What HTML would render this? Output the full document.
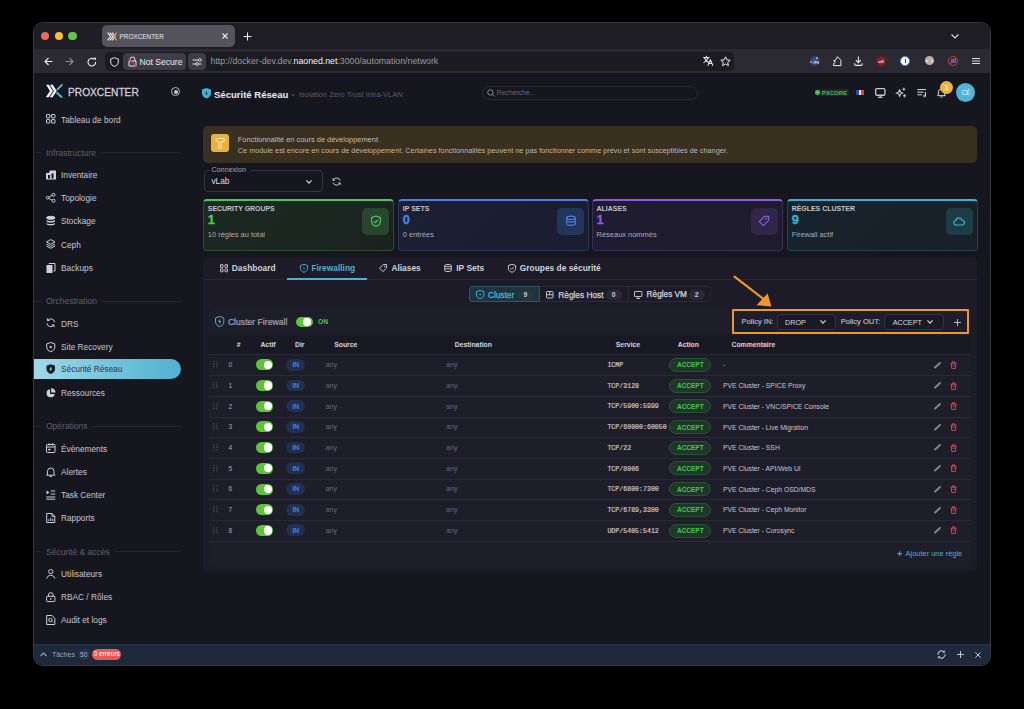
<!DOCTYPE html>
<html><head><meta charset="utf-8">
<style>
*{box-sizing:border-box;margin:0;padding:0}
html,body{width:1024px;height:709px;background:#000;overflow:hidden;font-family:"Liberation Sans",sans-serif}
#win{position:absolute;left:34px;top:23px;width:956px;height:641.5px;border-radius:9px;overflow:hidden;background:#16161f;box-shadow:0 0 0 1px #38373e}
#in{position:absolute;left:-34px;top:-23px;width:1024px;height:709px}
.a{position:absolute}
.t{position:absolute;white-space:nowrap;line-height:1}
svg{position:absolute;overflow:visible}
#title{left:34px;top:23px;width:956px;height:26px;background:#1e1d23}
#tool{left:34px;top:49px;width:956px;height:24px;background:#2b2a33}
#bottom{left:34px;top:644px;width:956px;height:21px;background:#1e293b;border-top:1px solid #26324a}
.side{color:#c6c6d0;font-size:8.3px}
.sec{color:#5f5f6b;font-size:8.5px}
.secline{position:absolute;height:1px;background:#262631}
</style></head><body>
<div id="win"><div id="in">
  <div class="a" id="title"></div>
  <div class="a" id="tool"></div>
  <!-- traffic lights -->
  <div class="a" style="left:40.6px;top:31.5px;width:8.8px;height:8.8px;border-radius:50%;background:#ee6a5f"></div>
  <div class="a" style="left:54.5px;top:31.5px;width:8.8px;height:8.8px;border-radius:50%;background:#f5c13b"></div>
  <div class="a" style="left:68.4px;top:31.5px;width:8.8px;height:8.8px;border-radius:50%;background:#5fc454"></div>
  <!-- tab -->
  <div class="a" style="left:102px;top:25px;width:133px;height:22px;border-radius:5px;background:#54535b"></div>
  <svg style="left:106.6px;top:31.5px" width="10" height="9" viewBox="0 0 10 9">
    <path d="M0.6 0.6L3.6 4.5L0.6 8.4M2.9 0.6L5.9 4.5L2.9 8.4" stroke="#ececf2" stroke-width="1.2" fill="none"/>
    <path d="M5.2 0.6L8 4.5L5.2 8.4" stroke="#ececf2" stroke-width="1.2" fill="none"/>
    <path d="M9.6 0.6L7.2 4.5L9.6 8.4" stroke="#f0962a" stroke-width="1.3" fill="none"/>
  </svg>
  <div class="t" style="left:119.6px;top:33.8px;font-size:6.4px;color:#ececf0">PROXCENTER</div>
  <svg style="left:222px;top:33px" width="6" height="6" viewBox="0 0 6 6"><path d="M0.5 0.5L5.5 5.5M5.5 0.5L0.5 5.5" stroke="#e8e8ee" stroke-width="1.1"/></svg>
  <svg style="left:243px;top:31.5px" width="9" height="9" viewBox="0 0 9 9"><path d="M4.5 0.5V8.5M0.5 4.5H8.5" stroke="#e8e8ee" stroke-width="1.1"/></svg>
  <!-- tab overflow chevron -->
  <svg style="left:950.5px;top:33.6px" width="8" height="5" viewBox="0 0 8 5"><path d="M0.5 0.5L4 4L7.5 0.5" stroke="#e0e0e6" stroke-width="1.1" fill="none"/></svg>

  <!-- toolbar -->
  <svg style="left:43.5px;top:57px" width="9" height="9" viewBox="0 0 9 9"><path d="M8.5 4.5H1M4.5 1L1 4.5L4.5 8" stroke="#ececf0" stroke-width="1.1" fill="none"/></svg>
  <svg style="left:65px;top:57px" width="9" height="9" viewBox="0 0 9 9"><path d="M0.5 4.5H8M4.5 1L8 4.5L4.5 8" stroke="#8e8d95" stroke-width="1.1" fill="none"/></svg>
  <svg style="left:86.5px;top:56.5px" width="10" height="10" viewBox="0 0 10 10"><path d="M8.6 5A3.8 3.8 0 1 1 7.2 2.2" stroke="#ececf0" stroke-width="1.1" fill="none"/><path d="M6.2 0.8H9V3.6Z" fill="#ececf0"/></svg>
  <div class="a" style="left:105px;top:52px;width:629px;height:19px;border-radius:5px;background:#1c1b22"></div>
  <svg style="left:110px;top:56.5px" width="9" height="10" viewBox="0 0 9 10"><path d="M4.5 0.6L8.3 2V5C8.3 7.3 6.6 8.8 4.5 9.4C2.4 8.8 0.7 7.3 0.7 5V2Z" stroke="#e6e6ec" stroke-width="1" fill="none"/></svg>
  <div class="a" style="left:123px;top:53px;width:63px;height:16.5px;border-radius:4px;background:#3e3d47"></div>
  <svg style="left:128px;top:56px" width="9" height="11" viewBox="0 0 9 11"><path d="M2 5V3.5A2.5 2.5 0 0 1 7 3.5V5M1 5H8V10H1Z" stroke="#e6e6ec" stroke-width="1" fill="none"/><path d="M0.5 3L8.5 10.5" stroke="#e0393e" stroke-width="1.1"/></svg>
  <div class="t" style="left:139.5px;top:58px;font-size:8.6px;color:#ececf0">Not Secure</div>
  <div class="a" style="left:188px;top:53px;width:18px;height:16.5px;border-radius:4px;background:#3e3d47"></div>
  <svg style="left:192px;top:57.5px" width="10" height="8" viewBox="0 0 10 8"><path d="M0.5 2H6M0.5 6H3.5M6.5 6H9.5" stroke="#e6e6ec" stroke-width="1"/><circle cx="7.8" cy="2" r="1.4" stroke="#e6e6ec" stroke-width="0.9" fill="none"/><circle cx="5" cy="6" r="1.4" stroke="#e6e6ec" stroke-width="0.9" fill="none"/></svg>
  <div class="t" style="left:210.5px;top:57.3px;font-size:8.77px;color:#9b9aa2">http://docker-dev.dev.<span style="color:#f4f4f6">naoned.net</span>:3000/automation/network</div>
  <svg style="left:702.8px;top:56px" width="10.4" height="9.8" viewBox="0 0 10.4 9.8" fill="none" stroke="#ececf0" stroke-width="1.05" stroke-linecap="round" stroke-linejoin="round"><path d="M0.6 1.5H6.2M3.4 0.3V1.5M1.5 1.7Q3 5.6 5.8 6.4M5.2 1.7Q4 5 0.8 6.6"/><path d="M5 9.4L7.4 3.8L9.8 9.4M5.9 7.6H8.9"/></svg>
  <svg style="left:719.5px;top:56px" width="11" height="11" viewBox="0 0 11 11"><path d="M5.5 0.8L6.9 3.9L10.2 4.2L7.7 6.4L8.4 9.7L5.5 8L2.6 9.7L3.3 6.4L0.8 4.2L4.1 3.9Z" stroke="#ececf0" stroke-width="1" fill="none" stroke-linejoin="round"/></svg>
  <!-- extensions -->
  <div class="a" style="left:809.9px;top:56px;width:10.3px;height:10.3px;border-radius:50%;background:radial-gradient(circle at 45% 50%,#3a5f9a,#183060)"></div><div class="a" style="left:815.5px;top:56.6px;width:2.6px;height:2.2px;border-radius:50%;background:#d9a96a"></div><div class="a" style="left:810.2px;top:60.8px;width:2px;height:2.4px;border-radius:50%;background:#c99a5e"></div><svg style="left:812.5px;top:59.5px" width="6" height="4" viewBox="0 0 6 4"><path d="M0.3 3.7L1.3 1.5M2 3.7V1.6H3.6V2.6H2M4.2 3.7V1.6L5.6 3.7V1.6" stroke="#e8eef8" stroke-width="0.6" fill="none"/></svg>
  <svg style="left:833px;top:56.2px" width="8.6" height="10.2" viewBox="0 0 8.6 10.2"><path d="M0.6 4.6H2.2L4.4 0.7L7.9 4.3V9.6H0.6V7.6L2.4 6.3Z" stroke="#ececf0" stroke-width="1" fill="none" stroke-linejoin="round"/></svg>
  <svg style="left:854px;top:56.2px" width="8.8" height="10" viewBox="0 0 8.8 10"><path d="M4.4 0.5V6.6M1.9 4.2L4.4 6.7L6.9 4.2M0.6 7.2V8.2Q0.6 9.4 1.8 9.4H7Q8.2 9.4 8.2 8.2V7.2" stroke="#ececf0" stroke-width="1.05" fill="none"/></svg>
  <svg style="left:876px;top:55.5px" width="10" height="11" viewBox="0 0 10 11"><path d="M5 0.5L9.5 2V6C9.5 8.4 7.3 9.8 5 10.5C2.7 9.8 0.5 8.4 0.5 6V2Z" fill="#8b1a1a"/><text x="5" y="6.8" font-size="4" text-anchor="middle" fill="#fff" font-family="Liberation Sans" font-weight="bold">uO</text></svg>
  <div class="a" style="left:900.3px;top:56px;width:9.8px;height:9.8px;border-radius:50%;background:#fff;border:1.3px solid #3d86f0"></div>
  <div class="a" style="left:904.5px;top:58.6px;width:1.4px;height:4.6px;background:#3a3a44"></div>
  <div class="a" style="left:924.7px;top:56.2px;width:9.3px;height:9.3px;border-radius:50%;background:#d6a884"></div>
  <div class="a" style="left:924.8px;top:59.3px;width:4.2px;height:4.2px;border-radius:50%;background:#dfeaf2;border:0.8px solid #8fb8d8"></div>
  <div class="a" style="left:929.6px;top:59.3px;width:4.2px;height:4.2px;border-radius:50%;background:#dfeaf2;border:0.8px solid #8fb8d8"></div>
  <div class="a" style="left:948.4px;top:56px;width:9.8px;height:9.8px;border-radius:50%;background:#2a2a3c;border:1.5px solid #d63535"></div>
  <div class="a" style="left:950.6px;top:59.2px;width:5.4px;height:3.4px;background:#3a6ad0"></div>
  <svg style="left:948.4px;top:56px" width="9.8" height="9.8" viewBox="0 0 9.8 9.8"><path d="M8 1.8L1.8 8" stroke="#d63535" stroke-width="1.2"/></svg>
  <svg style="left:972px;top:57.8px" width="8" height="6" viewBox="0 0 8 6"><path d="M0 0.55H8M0 3H8M0 5.45H8" stroke="#e0e0e6" stroke-width="1.1"/></svg>


  <!-- sidebar -->
  <svg style="left:45px;top:84px" width="18" height="14" viewBox="0 0 18 14">
    <polygon points="1.00,0.80 3.90,0.80 7.90,7.00 3.70,13.20 0.80,13.20 5.00,7.00" fill="#f2f2f6"/><polygon points="4.90,0.80 7.80,0.80 11.80,7.00 7.60,13.20 4.70,13.20 8.90,7.00" fill="#f2f2f6"/>
    <path d="M16.9 0.9000000000000057L12.6 5.3M12.2 8.9L16.5 12.9" stroke="#48b6d8" stroke-width="2" stroke-linecap="round" fill="none"/>
  </svg>
  <div class="t" style="left:68px;top:87.5px;font-size:10.2px;color:#cfcfd9;-webkit-text-stroke:0.3px #cfcfd9">PROXCENTER</div>
  <div class="a" style="left:171px;top:87px;width:9px;height:9px;border-radius:50%;border:1px solid #b8b8c4"></div>
  <div class="a" style="left:173.5px;top:89.5px;width:4px;height:4px;border-radius:50%;background:#c8c8d4"></div>
  <div class="a" style="left:34px;top:359.1px;width:146.8px;height:20.1px;border-radius:0 10px 10px 0;background:linear-gradient(90deg,#9ed8e8,#4fb2d1)"></div>
  <div class="secline" style="left:34px;top:152px;width:6.5px"></div>
  <div class="t sec" style="left:46px;top:148.8px">Infrastructure</div>
  <div class="secline" style="left:101px;top:152px;width:80px"></div>
  <div class="secline" style="left:34px;top:301px;width:6.5px"></div>
  <div class="t sec" style="left:46px;top:297.4px">Orchestration</div>
  <div class="secline" style="left:102px;top:301px;width:78.5px"></div>
  <div class="secline" style="left:34px;top:426px;width:6.5px"></div>
  <div class="t sec" style="left:46px;top:422.1px">Opérations</div>
  <div class="secline" style="left:92px;top:426px;width:88.5px"></div>
  <div class="secline" style="left:34px;top:551px;width:6.5px"></div>
  <div class="t sec" style="left:46px;top:547.7px">Sécurité &amp; accès</div>
  <div class="secline" style="left:113.6px;top:551px;width:67.4px"></div>
<svg style="left:46px;top:114.45px" width="9.5" height="9.5" viewBox="0 0 9.5 9.5" fill="none" stroke="#d0d0da" stroke-width="1"><rect x="0.5" y="0.5" width="3.4" height="3.4" rx="0.4"/><rect x="5.6" y="0.5" width="3.4" height="3.4" rx="0.4"/><rect x="0.5" y="5.6" width="3.4" height="3.4" rx="0.4"/><rect x="5.6" y="5.6" width="3.4" height="3.4" rx="0.4"/></svg>
<div class="t side" style="left:61px;top:115.52px">Tableau de bord</div>
<svg style="left:46px;top:170.25px" width="9.5" height="9.5" viewBox="0 0 9.5 9.5" fill="none" stroke="#d0d0da" stroke-width="1"><path d="M0 3H3V1.5H4V0.5H10V9.5H0Z" fill="#d0d0da" stroke="none"/><rect x="2" y="5" width="2" height="3.5" fill="#17161f" stroke="none"/><rect x="5.5" y="3.5" width="2" height="5" fill="#17161f" stroke="none"/></svg>
<div class="t side" style="left:61px;top:171.32px">Inventaire</div>
<svg style="left:46px;top:193.15px" width="9.5" height="9.5" viewBox="0 0 9.5 9.5" fill="none" stroke="#d0d0da" stroke-width="1"><circle cx="7.5" cy="1.8" r="1.5"/><circle cx="7.5" cy="7.7" r="1.5"/><circle cx="1.6" cy="4.75" r="1.3"/><path d="M2.8 4.1L6 2.4M2.8 5.4L6 7.1"/></svg>
<div class="t side" style="left:61px;top:194.22px">Topologie</div>
<svg style="left:46px;top:216.25px" width="9.5" height="9.5" viewBox="0 0 9.5 9.5" fill="none" stroke="#d0d0da" stroke-width="1"><ellipse cx="4.75" cy="1.8" rx="4.2" ry="1.5" fill="#d0d0da"/><path d="M0.55 3.6C0.55 5.6 8.95 5.6 8.95 3.6V5C8.95 7 0.55 7 0.55 5Z" fill="#d0d0da" stroke="none"/><path d="M0.55 6.6C0.55 8.6 8.95 8.6 8.95 6.6V7.8C8.95 9.8 0.55 9.8 0.55 7.8Z" fill="#d0d0da" stroke="none"/></svg>
<div class="t side" style="left:61px;top:217.32px">Stockage</div>
<svg style="left:46px;top:239.45px" width="9.5" height="9.5" viewBox="0 0 9.5 9.5" fill="none" stroke="#d0d0da" stroke-width="1"><path d="M4.75 0.6L9 2.9L4.75 5.2L0.5 2.9Z"/><path d="M0.5 5L4.75 7.3L9 5"/><path d="M0.5 7L4.75 9.3L9 7"/></svg>
<div class="t side" style="left:61px;top:240.52px">Ceph</div>
<svg style="left:46px;top:262.55px" width="9.5" height="9.5" viewBox="0 0 9.5 9.5" fill="none" stroke="#d0d0da" stroke-width="1"><rect x="0.5" y="2" width="6" height="8" rx="0.6" fill="#d0d0da" stroke="none"/><path d="M3 1.2V0.5H9V8H7.5" /></svg>
<div class="t side" style="left:61px;top:263.62px">Backups</div>
<svg style="left:46px;top:318.45px" width="9.5" height="9.5" viewBox="0 0 9.5 9.5" fill="none" stroke="#d0d0da" stroke-width="1"><path d="M8.7 4.2A4 4 0 0 0 1.6 2.4M0.8 5.3A4 4 0 0 0 7.9 7.1"/><path d="M1.4 0.4V2.6H3.6M8.1 9.1V6.9H5.9"/></svg>
<div class="t side" style="left:61px;top:319.52px">DRS</div>
<svg style="left:46px;top:341.65px" width="9.5" height="9.5" viewBox="0 0 9.5 9.5" fill="none" stroke="#d0d0da" stroke-width="1"><path d="M4.75 0.5L8.8 1.9V5C8.8 7.4 7 9 4.75 9.7C2.5 9 0.7 7.4 0.7 5V1.9Z"/><path d="M4.75 3.2L5.3 4.4L6.5 4.5L5.6 5.3L5.9 6.5L4.75 5.8L3.6 6.5L3.9 5.3L3 4.5L4.2 4.4Z" fill="#d0d0da" stroke="none"/></svg>
<div class="t side" style="left:61px;top:342.72px">Site Recovery</div>
<svg style="left:46px;top:364.45px" width="9.5" height="9.5" viewBox="0 0 9.5 9.5" fill="none" stroke="#d0d0da" stroke-width="1"><path d="M4.75 0.3L9 1.8V5C9 7.5 7.1 9.1 4.75 9.9C2.4 9.1 0.5 7.5 0.5 5V1.8Z" fill="#141a20" stroke="none"/><path d="M5.6 1.9L3.1 5.4H4.6L3.9 8L6.4 4.5H4.9Z" fill="#8fd3e6" stroke="none"/></svg>
<div class="t side" style="left:61px;top:365.0px;color:#2a3a44">Sécurité Réseau</div>
<svg style="left:46px;top:387.55px" width="9.5" height="9.5" viewBox="0 0 9.5 9.5" fill="none" stroke="#d0d0da" stroke-width="1"><path d="M4 1.2A4.1 4.1 0 1 0 8.7 5.9H4Z" fill="#d0d0da" stroke="none"/><path d="M5.2 0.3A4.1 4.1 0 0 1 9.5 4.6H5.2Z" fill="#d0d0da" stroke="none"/></svg>
<div class="t side" style="left:61px;top:388.62px">Ressources</div>
<svg style="left:46px;top:443.45px" width="9.5" height="9.5" viewBox="0 0 9.5 9.5" fill="none" stroke="#d0d0da" stroke-width="1"><rect x="0.5" y="1.5" width="8.5" height="8" rx="0.8"/><path d="M0.5 4H9M3 0.3V2.5M6.5 0.3V2.5"/><rect x="2.2" y="5.8" width="2.2" height="1.6" fill="#d0d0da" stroke="none"/></svg>
<div class="t side" style="left:61px;top:444.52px">Évènements</div>
<svg style="left:46px;top:466.75px" width="9.5" height="9.5" viewBox="0 0 9.5 9.5" fill="none" stroke="#d0d0da" stroke-width="1"><path d="M1.5 7.2V4.3A3.25 3.25 0 0 1 8 4.3V7.2L9 8.2H0.5Z"/><path d="M3.6 9.5H5.9"/></svg>
<div class="t side" style="left:61px;top:467.82px">Alertes</div>
<svg style="left:46px;top:489.75px" width="9.5" height="9.5" viewBox="0 0 9.5 9.5" fill="none" stroke="#d0d0da" stroke-width="1"><path d="M0.5 0.5L3.5 2.5L0.5 4.5Z" fill="#d0d0da" stroke="none"/><path d="M4.8 1H9.3M4.8 4H9.3M0.3 7H9.3M0.3 9.2H9.3"/></svg>
<div class="t side" style="left:61px;top:490.82px">Task Center</div>
<svg style="left:46px;top:512.85px" width="9.5" height="9.5" viewBox="0 0 9.5 9.5" fill="none" stroke="#d0d0da" stroke-width="1"><path d="M0.7 0.5H6L8.8 3.3V9.5H0.7Z"/><path d="M6 0.5V3.3H8.8"/><path d="M2.8 8V6.3M4.75 8V4.8M6.7 8V5.8"/></svg>
<div class="t side" style="left:61px;top:513.92px">Rapports</div>
<svg style="left:46px;top:569.15px" width="9.5" height="9.5" viewBox="0 0 9.5 9.5" fill="none" stroke="#d0d0da" stroke-width="1"><circle cx="4.75" cy="2.6" r="2.1"/><path d="M0.6 9.6C1.3 7.3 2.8 6.3 4.75 6.3C6.7 6.3 8.2 7.3 8.9 9.6"/></svg>
<div class="t side" style="left:61px;top:570.22px">Utilisateurs</div>
<svg style="left:46px;top:592.25px" width="9.5" height="9.5" viewBox="0 0 9.5 9.5" fill="none" stroke="#d0d0da" stroke-width="1"><rect x="0.6" y="4.3" width="8.3" height="5.3" rx="0.8"/><path d="M2.4 4.3V3A2.35 2.35 0 0 1 7.1 3V4.3"/><rect x="4" y="6.2" width="1.5" height="1.5" fill="#d0d0da" stroke="none"/></svg>
<div class="t side" style="left:61px;top:593.32px">RBAC / Rôles</div>
<svg style="left:46px;top:615.25px" width="9.5" height="9.5" viewBox="0 0 9.5 9.5" fill="none" stroke="#d0d0da" stroke-width="1"><path d="M0.7 0.5H6L8.8 3.3V9.5H0.7Z"/><circle cx="4.4" cy="5" r="1.7"/><path d="M5.6 6.2L6.8 7.4"/></svg>
<div class="t side" style="left:61px;top:616.32px">Audit et logs</div>

  <!-- header -->
  <svg style="left:201.8px;top:87.7px" width="9" height="10.5" viewBox="0 0 9 10.5"><path d="M4.5 0L9 1.6V5.2C9 7.8 7 9.6 4.5 10.5C2 9.6 0 7.8 0 5.2V1.6Z" fill="#45aed6"/><path d="M5.1 2.6L3.2 5.6H4.6L4 7.9L5.9 4.9H4.5Z" fill="#17202a"/></svg>
  <div class="t" style="left:214px;top:89.5px;font-size:9.56px;font-weight:bold;color:#ebebf2">Sécurité Réseau</div>
  <div class="a" style="left:292.4px;top:94.3px;width:2px;height:2px;border-radius:50%;background:#555766"></div>
  <div class="t" style="left:298.8px;top:91.2px;font-size:7.58px;color:#5a5c6c">Isolation Zero Trust intra-VLAN</div>
  <div class="a" style="left:482.2px;top:86px;width:215.6px;height:13.8px;border-radius:7px;border:1px solid #2b2b38"></div>
  <svg style="left:486.5px;top:89px" width="8" height="8" viewBox="0 0 8 8"><circle cx="3.4" cy="3.4" r="2.7" stroke="#8a8a96" stroke-width="1" fill="none"/><path d="M5.4 5.4L7.4 7.4" stroke="#8a8a96" stroke-width="1"/></svg>
  <div class="t" style="left:496.8px;top:90.1px;font-size:6.84px;color:#666673">Recherche...</div>
  <div class="a" style="left:814.7px;top:88.9px;width:34.3px;height:7px;border-radius:2px;background:#1c2a22"></div>
  <div class="a" style="left:815.4px;top:90.3px;width:4.8px;height:4.8px;border-radius:50%;background:#4cc35a"></div>
  <div class="t" style="left:821.7px;top:89.6px;font-size:6.04px;font-weight:bold;color:#4cb85a">PXCORE</div>
  <div class="a" style="left:856px;top:90px;width:8px;height:5px;background:linear-gradient(90deg,#2b4aa0 33%,#e8e8f0 33%,#e8e8f0 66%,#d8454a 66%)"></div>
  <svg style="left:875.4px;top:88px" width="10.6" height="10" viewBox="0 0 10.6 10"><rect x="0.65" y="0.65" width="9.3" height="6.6" rx="1.2" stroke="#c8c8d4" stroke-width="1.3" fill="none"/><path d="M5.3 7.5V9.3M3 9.4H7.6" stroke="#c8c8d4" stroke-width="1.1"/></svg>
  <svg style="left:0px;top:0px" width="1024" height="709" viewBox="0 0 1024 709" pointer-events="none"><path d="M899.6 89.6Q899.87 92.73 903.0 93Q899.87 93.27 899.6 96.4Q899.33 93.27 896.2 93Q899.33 92.73 899.6 89.6Z" stroke="#c8c8d4" stroke-width="1.1" fill="none" stroke-linejoin="round"/><path d="M903.9 87.7Q904.05 89.05 905.4 89.2Q904.05 89.35 903.9 90.7Q903.75 89.35 902.4 89.2Q903.75 89.05 903.9 87.7Z" fill="#c8c8d4" stroke="#c8c8d4" stroke-width="0.4"/><path d="M904.5 94.1Q904.67 95.63 906.2 95.8Q904.67 95.97 904.5 97.5Q904.33 95.97 902.8 95.8Q904.33 95.63 904.5 94.1Z" fill="#c8c8d4" stroke="#c8c8d4" stroke-width="0.4"/></svg>
  <svg style="left:916.6px;top:88.9px" width="10" height="8" viewBox="0 0 10 8"><path d="M0.3 0.6H9M0.3 3.2H6.5M0.3 5.8H5" stroke="#d8d8e2" stroke-width="1"/><path d="M8.5 3V6.9" stroke="#d8d8e2" stroke-width="1"/><circle cx="7.6" cy="7" r="1" stroke="#d8d8e2" stroke-width="0.9" fill="none"/></svg>
  <svg style="left:936.8px;top:88.2px" width="9" height="9.5" viewBox="0 0 9 9.5"><path d="M1.4 6.8V4A3.1 3.1 0 0 1 7.6 4V6.8L8.5 7.7H0.5Z" stroke="#d8d8e2" stroke-width="1" fill="none"/><path d="M3.4 9H5.6" stroke="#d8d8e2" stroke-width="1"/></svg>
  <div class="a" style="left:940.2px;top:81.2px;width:13px;height:13px;border-radius:50%;background:#f0b43a"></div>
  <div class="t" style="left:944.7px;top:84.2px;font-size:7px;font-weight:bold;color:#fff">1</div>
  <div class="a" style="left:956.2px;top:83px;width:19.3px;height:19.3px;border-radius:50%;background:#52b3d6"></div>
  <div class="t" style="left:961.4px;top:89.8px;font-size:6.4px;color:#eaf6fb">CÉ</div>

  <!-- warning -->
  <div class="a" style="left:203px;top:125.5px;width:774px;height:37.5px;border-radius:5px;background:#3a3020"></div>
  <div class="a" style="left:211.4px;top:133.8px;width:17.8px;height:18.2px;border-radius:3px;background:#e9b23f"></div>
  <svg style="left:215.4px;top:137.8px" width="10" height="11" viewBox="0 0 10 11"><path d="M1 2.4Q1 0.7 2.8 0.5L9.2 0.5V3.5H6.2V9.8Q6.2 10.5 5.5 10.5H4.6Q3.9 10.5 3.9 9.8V3.5H2.6Q1 3.6 1 2.4Z" stroke="#fbf0d8" stroke-width="0.95" fill="none" stroke-linejoin="round"/></svg>
  <div class="t" style="left:237.8px;top:136px;font-size:7.45px;color:#c4beb2">Fonctionnalité en cours de développement</div>
  <div class="t" style="left:237.8px;top:147px;font-size:7.31px;color:#bcb6ab">Ce module est encore en cours de développement. Certaines fonctionnalités peuvent ne pas fonctionner comme prévu et sont susceptibles de changer.</div>

  <!-- connexion select -->
  <div class="a" style="left:203.5px;top:169.9px;width:119.2px;height:22.5px;border-radius:4px;border:1px solid #353543"></div>
  <div class="a" style="left:209.5px;top:168px;width:41px;height:4px;background:#17161f"></div>
  <div class="t" style="left:211.4px;top:166.2px;font-size:7.22px;color:#a3a3ae">Connexion</div>
  <div class="t" style="left:211.4px;top:176.9px;font-size:8.35px;color:#dcdce4">vLab</div>
  <svg style="left:306px;top:179.8px" width="6" height="4" viewBox="0 0 6 4"><path d="M0.4 0.4L3 3.2L5.6 0.4" stroke="#d8d8e2" stroke-width="1.1" fill="none"/></svg>
  <svg style="left:331.5px;top:176.6px" width="9.2" height="9.2" viewBox="0 0 9.2 9.2"><path d="M8.2 3.6A3.8 3.8 0 0 0 1.2 3.1M1 5.6A3.8 3.8 0 0 0 8 6.1" stroke="#c8c8d4" stroke-width="1" fill="none"/><path d="M1 1.3V3.3H3M8.2 7.9V5.9H6.2" stroke="#c8c8d4" stroke-width="1" fill="none"/></svg>
  <div class="a" style="left:202.9px;top:198.9px;width:191px;height:51.8px;border-radius:4px;background:linear-gradient(135deg,#1c2a22,#1a2220);border:1px solid #2b4b33;border-top:2px solid #4cc85a"></div>
  <div class="t" style="left:207.8px;top:206px;font-size:6.94px;font-weight:bold;color:#c2c4ca">SECURITY GROUPS</div>
  <div class="t" style="left:207.8px;top:214.4px;font-size:12.8px;font-weight:bold;color:#4cc85a;-webkit-text-stroke:0.3px #4cc85a">1</div>
  <div class="t" style="left:207.8px;top:231px;font-size:7.46px;color:#a8acb4">10 règles au total</div>
  <div class="a" style="left:362.1px;top:208.3px;width:26.8px;height:26.3px;border-radius:5px;background:#29452f"></div>
  <svg style="left:369.5px;top:215.45px" width="12" height="12" viewBox="0 0 12 12"><path d="M6 1L10.4 2.6V6.2C10.4 8.9 8.5 10.6 6 11.4C3.5 10.6 1.6 8.9 1.6 6.2V2.6Z" stroke="#4cc85a" stroke-width="1.15" fill="none" stroke-linejoin="round"/><path d="M4 6.2L5.4 7.6L8.1 4.9" stroke="#4cc85a" stroke-width="1.15" fill="none"/></svg>
  <div class="a" style="left:397.9px;top:198.9px;width:191px;height:51.8px;border-radius:4px;background:linear-gradient(135deg,#1b2036,#1a1d2e);border:1px solid #28365a;border-top:2px solid #4a80e6"></div>
  <div class="t" style="left:402.79999999999995px;top:206px;font-size:6.94px;font-weight:bold;color:#c2c4ca">IP SETS</div>
  <div class="t" style="left:402.79999999999995px;top:214.4px;font-size:12.8px;font-weight:bold;color:#4a80e6;-webkit-text-stroke:0.3px #4a80e6">0</div>
  <div class="t" style="left:402.79999999999995px;top:231px;font-size:7.46px;color:#a8acb4">0 entrées</div>
  <div class="a" style="left:557.0999999999999px;top:208.3px;width:26.8px;height:26.3px;border-radius:5px;background:#23355a"></div>
  <svg style="left:564.5px;top:215.45px" width="12" height="12" viewBox="0 0 12 12"><ellipse cx="6" cy="2.8" rx="4.3" ry="1.7" stroke="#4a80e6" stroke-width="1.15" fill="none"/><path d="M1.7 2.8V9.2C1.7 10.4 10.3 10.4 10.3 9.2V2.8M1.7 6C1.7 7.2 10.3 7.2 10.3 6" stroke="#4a80e6" stroke-width="1.15" fill="none"/></svg>
  <div class="a" style="left:591.7px;top:198.9px;width:191px;height:51.8px;border-radius:4px;background:linear-gradient(135deg,#201c31,#1e1b2d);border:1px solid #3a2d58;border-top:2px solid #8c5ce0"></div>
  <div class="t" style="left:596.6px;top:206px;font-size:6.94px;font-weight:bold;color:#c2c4ca">ALIASES</div>
  <div class="t" style="left:596.6px;top:214.4px;font-size:12.8px;font-weight:bold;color:#8c5ce0;-webkit-text-stroke:0.3px #8c5ce0">1</div>
  <div class="t" style="left:596.6px;top:231px;font-size:7.46px;color:#a8acb4">Réseaux nommés</div>
  <div class="a" style="left:750.9000000000001px;top:208.3px;width:26.8px;height:26.3px;border-radius:5px;background:#2f2648"></div>
  <svg style="left:758.3px;top:215.45px" width="12" height="12" viewBox="0 0 12 12"><path d="M1.3 6.6L6.6 1.3H10.7V5.4L5.4 10.7Z" stroke="#8c5ce0" stroke-width="1.15" fill="none" stroke-linejoin="round"/><circle cx="8.3" cy="3.7" r="0.9" fill="#8c5ce0"/></svg>
  <div class="a" style="left:786.8px;top:198.9px;width:191px;height:51.8px;border-radius:4px;background:linear-gradient(135deg,#17242d,#181f28);border:1px solid #1f4350;border-top:2px solid #3bb0d6"></div>
  <div class="t" style="left:791.6999999999999px;top:206px;font-size:6.94px;font-weight:bold;color:#c2c4ca">RÈGLES CLUSTER</div>
  <div class="t" style="left:791.6999999999999px;top:214.4px;font-size:12.8px;font-weight:bold;color:#3bb0d6;-webkit-text-stroke:0.3px #3bb0d6">9</div>
  <div class="t" style="left:791.6999999999999px;top:231px;font-size:7.46px;color:#a8acb4">Firewall actif</div>
  <div class="a" style="left:946.0px;top:208.3px;width:26.8px;height:26.3px;border-radius:5px;background:#1e3b46"></div>
  <svg style="left:953.4px;top:215.45px" width="12" height="12" viewBox="0 0 12 12"><path d="M3.4 10H8.9A2.4 2.4 0 0 0 9.2 5.2A3.4 3.4 0 0 0 2.7 5.5A2.25 2.25 0 0 0 3.4 10Z" stroke="#3bb0d6" stroke-width="1.15" fill="none"/></svg>

  <!-- panel -->
  <div class="a" style="left:203.2px;top:257px;width:773.6px;height:314.3px;border-radius:5px;background:#1c1b27"></div>
  <div class="a" style="left:203.2px;top:279px;width:773.6px;height:1px;background:#272633"></div>
  <div class="a" style="left:287.3px;top:277.5px;width:79.7px;height:2px;background:#4fb0d0"></div>
  <svg style="left:219.8px;top:264.4px" width="8" height="8.4" viewBox="0 0 8 8.4" fill="none" stroke="#d2d2dc" stroke-width="0.95"><rect x="0.5" y="0.6" width="2.5" height="2.8" rx="0.3"/><rect x="5" y="0.6" width="2.5" height="2.8" rx="0.3"/><rect x="0.5" y="5" width="2.5" height="2.8" rx="0.3"/><rect x="5" y="5" width="2.5" height="2.8" rx="0.3"/></svg>
  <div class="t" style="left:231.8px;top:264.1px;font-size:8.4px;font-weight:bold;color:#d2d2dc">Dashboard</div>
  <svg style="left:299.6px;top:264.4px" width="8" height="8.4" viewBox="0 0 8 8.4" fill="none" stroke="#4fb0d0" stroke-width="0.95"><path d="M4 0.3L7.6 1.5V4.3C7.6 6.4 6 7.7 4 8.3C2 7.7 0.4 6.4 0.4 4.3V1.5Z"/><path d="M4.4 2.2L2.9 4.5H4.1L3.6 6.3L5.1 4H3.9Z" fill="#4fb0d0" stroke="none"/></svg>
  <div class="t" style="left:311.4px;top:264.1px;font-size:8.4px;font-weight:bold;color:#4fb0d0">Firewalling</div>
  <svg style="left:378.8px;top:264.4px" width="8" height="8.4" viewBox="0 0 8 8.4" fill="none" stroke="#d2d2dc" stroke-width="0.95"><path d="M0.5 4.2L4.2 0.5H7.6V3.9L3.9 7.6Z" stroke-linejoin="round"/><circle cx="5.6" cy="2.5" r="0.7" fill="#d2d2dc" stroke="none"/></svg>
  <div class="t" style="left:391.4px;top:264.1px;font-size:8.4px;font-weight:bold;color:#d2d2dc">Aliases</div>
  <svg style="left:444.2px;top:264.4px" width="8" height="8.4" viewBox="0 0 8 8.4" fill="none" stroke="#d2d2dc" stroke-width="0.95"><ellipse cx="4" cy="1.6" rx="3.3" ry="1.2"/><path d="M0.7 1.6V6.8C0.7 7.7 7.3 7.7 7.3 6.8V1.6M0.7 4.2C0.7 5.1 7.3 5.1 7.3 4.2"/></svg>
  <div class="t" style="left:456.3px;top:264.1px;font-size:8.4px;font-weight:bold;color:#d2d2dc">IP Sets</div>
  <svg style="left:508px;top:264.4px" width="8" height="8.4" viewBox="0 0 8 8.4" fill="none" stroke="#d2d2dc" stroke-width="0.95"><path d="M4 0.3L7.6 1.5V4.3C7.6 6.4 6 7.7 4 8.3C2 7.7 0.4 6.4 0.4 4.3V1.5Z"/><path d="M2.5 4.2L3.6 5.3L5.6 3.2"/></svg>
  <div class="t" style="left:519.8px;top:264.1px;font-size:8.4px;font-weight:bold;color:#d2d2dc">Groupes de sécurité</div>

  <div class="a" style="left:469.4px;top:286.3px;width:241.5px;height:16px;border-radius:3px;border:1px solid #2b2b38"></div>
  <div class="a" style="left:469.4px;top:286.3px;width:70.6px;height:16px;border-radius:3px 0 0 3px;background:#1a3440;border:1px solid #2b5868"></div>
  <div class="a" style="left:627.6px;top:286.3px;width:1px;height:16px;background:#2b2b38"></div>
  <svg style="left:475.7px;top:290px" width="8.4" height="9" viewBox="0 0 8.4 9" fill="none" stroke="#52b3d6" stroke-width="0.95"><path d="M4.2 0.4L7.9 1.6V4.6C7.9 6.8 6.3 8.1 4.2 8.7C2.1 8.1 0.5 6.8 0.5 4.6V1.6Z"/><path d="M4.6 2.4L3.1 4.8H4.3L3.8 6.6L5.3 4.2H4.1Z" fill="#52b3d6" stroke="none"/></svg>
  <div class="t" style="left:487.9px;top:290.7px;font-size:8.3px;color:#52b3d6;-webkit-text-stroke:0.25px #52b3d6">Cluster</div>
  <div class="a" style="left:517.1px;top:289.6px;width:17px;height:10.2px;border-radius:5.1px;background:#263540"></div>
  <div class="t" style="left:523.6px;top:292.1px;font-size:6.8px;font-weight:bold;color:#c8ccd4">9</div>
  <svg style="left:546.3px;top:290.5px" width="7.5" height="7.5" viewBox="0 0 7.5 7.5" fill="none" stroke="#c8c8d2" stroke-width="0.95"><rect x="0.5" y="0.5" width="6.5" height="6.5" rx="0.6"/><path d="M0.5 3.75H7M3.75 0.5V3.75"/></svg>
  <div class="t" style="left:558.3px;top:290.7px;font-size:8.3px;color:#d2d2dc;-webkit-text-stroke:0.25px #d2d2dc">Règles Host</div>
  <div class="a" style="left:605.5px;top:289.6px;width:16.3px;height:10.2px;border-radius:5.1px;background:#2a2a36"></div>
  <div class="t" style="left:611.8px;top:292.1px;font-size:6.8px;font-weight:bold;color:#c8c8d0">0</div>
  <svg style="left:634px;top:290.5px" width="8.4" height="8" viewBox="0 0 8.4 8" fill="none" stroke="#c8c8d2" stroke-width="0.95"><rect x="0.5" y="0.5" width="7.4" height="5" rx="0.5"/><path d="M4.2 5.5V7.2M2.4 7.5H6"/></svg>
  <div class="t" style="left:646.6px;top:290.7px;font-size:8.25px;color:#d2d2dc;-webkit-text-stroke:0.25px #d2d2dc">Règles VM</div>
  <div class="a" style="left:688.5px;top:289.6px;width:16px;height:10.2px;border-radius:5.1px;background:#2a2a36"></div>
  <div class="t" style="left:694.8px;top:292.1px;font-size:6.8px;font-weight:bold;color:#c8c8d0">2</div>

  <!-- inner card -->
  <div class="a" style="left:209.2px;top:308.6px;width:762px;height:256.5px;border-radius:5px;background:#1e1d2a"></div>
  <svg style="left:214.9px;top:316.4px" width="9.3" height="11.1" viewBox="0 0 9.3 11.1" fill="none" stroke="#4fb0d0" stroke-width="1"><path d="M4.65 0.5L8.8 2V5.6C8.8 8.2 7 9.9 4.65 10.6C2.3 9.9 0.5 8.2 0.5 5.6V2Z"/><path d="M5.5 2.4L3 6.1H4.6L3.9 8.6L6.4 4.9H4.8Z" fill="#4fb0d0" stroke="none"/></svg>
  <div class="t" style="left:227.9px;top:318px;font-size:8.64px;color:#a4a4b0;-webkit-text-stroke:0.2px #a4a4b0">Cluster Firewall</div>
  <div class="a" style="left:295.8px;top:316.7px;width:16.8px;height:10.5px;border-radius:5.25px;background:#5fc43a"></div>
  <div class="a" style="left:302.9px;top:318px;width:7.9px;height:7.9px;border-radius:50%;background:#fff"></div>
  <div class="t" style="left:318px;top:319.2px;font-size:6.67px;font-weight:bold;color:#4cc35a">ON</div>

  <!-- policy -->
  <svg style="left:730px;top:274px" width="45" height="36" viewBox="0 0 45 36"><path d="M4.5 2.6L36 27" stroke="#f0962a" stroke-width="2.2" stroke-linecap="round"/><path d="M41.4 32.4L26.5 31.2L37.6 19.4Z" fill="#f0962a"/></svg>
  <div class="a" style="left:731.9px;top:309px;width:237.2px;height:25px;border:2px solid #f0962a;border-radius:1px"></div>
  <div class="t" style="left:741.6px;top:318.3px;font-size:7.55px;color:#b4b4c0;-webkit-text-stroke:0.2px #b4b4c0">Policy IN:</div>
  <div class="a" style="left:777.2px;top:313.5px;width:59.3px;height:16.5px;border-radius:4px;border:1px solid #34343f;background:#1a1a24"></div>
  <div class="t" style="left:785px;top:318.6px;font-size:7.2px;color:#d8d8e2">DROP</div>
  <svg style="left:819.5px;top:320px" width="6" height="4" viewBox="0 0 6 4"><path d="M0.4 0.4L3 3.2L5.6 0.4" stroke="#d8d8e2" stroke-width="1.1" fill="none"/></svg>
  <div class="t" style="left:840.7px;top:318.3px;font-size:7.55px;color:#b4b4c0;-webkit-text-stroke:0.2px #b4b4c0">Policy OUT:</div>
  <div class="a" style="left:884.3px;top:313.5px;width:59.3px;height:16.5px;border-radius:4px;border:1px solid #34343f;background:#1a1a24"></div>
  <div class="t" style="left:892.7px;top:318.6px;font-size:7.2px;color:#d8d8e2">ACCEPT</div>
  <svg style="left:926.8px;top:320px" width="6" height="4" viewBox="0 0 6 4"><path d="M0.4 0.4L3 3.2L5.6 0.4" stroke="#d8d8e2" stroke-width="1.1" fill="none"/></svg>
  <svg style="left:954px;top:318.5px" width="7" height="7" viewBox="0 0 7 7"><path d="M3.5 0V7M0 3.5H7" stroke="#b8b8c4" stroke-width="1"/></svg>

  <!-- table header -->
  <div class="a" style="left:209.2px;top:335px;width:762px;height:19.4px;background:#191923"></div>
  <div class="a" style="left:209.2px;top:354.4px;width:761.6px;height:1px;background:#2a2a36"></div>
  <div class="t" style="left:236.7px;top:342.2px;font-size:6.85px;font-weight:bold;color:#d6d6e0">#</div>
  <div class="t" style="left:260.4px;top:342.2px;font-size:6.85px;font-weight:bold;color:#d6d6e0">Actif</div>
  <div class="t" style="left:295px;top:342.2px;font-size:6.85px;font-weight:bold;color:#d6d6e0">Dir</div>
  <div class="t" style="left:334.2px;top:342.2px;font-size:6.85px;font-weight:bold;color:#d6d6e0">Source</div>
  <div class="t" style="left:454.7px;top:342.2px;font-size:6.85px;font-weight:bold;color:#d6d6e0">Destination</div>
  <div class="t" style="left:615.8px;top:342.2px;font-size:6.85px;font-weight:bold;color:#d6d6e0">Service</div>
  <div class="t" style="left:677.7px;top:342.2px;font-size:6.85px;font-weight:bold;color:#d6d6e0">Action</div>
  <div class="t" style="left:731.5px;top:342.2px;font-size:6.85px;font-weight:bold;color:#d6d6e0">Commentaire</div>
  <div class="a" style="left:209.2px;top:375.1px;width:761.6px;height:1px;background:#2a2a36"></div>
  <svg style="left:212.5px;top:361.1px" width="5" height="6.5" viewBox="0 0 5 6.5" fill="#5a5a68"><circle cx="0.8" cy="0.8" r="0.65"/><circle cx="4" cy="0.8" r="0.65"/><circle cx="0.8" cy="3.25" r="0.65"/><circle cx="4" cy="3.25" r="0.65"/><circle cx="0.8" cy="5.7" r="0.65"/><circle cx="4" cy="5.7" r="0.65"/></svg>
  <div class="t" style="left:228.5px;top:362.1px;font-size:6.6px;color:#a8a8b2">0</div>
  <div class="a" style="left:255.9px;top:359.3px;width:17.5px;height:11px;border-radius:5.5px;background:#5fc43a"></div>
  <div class="a" style="left:263.6px;top:360.6px;width:8.4px;height:8.4px;border-radius:50%;background:#fff"></div>
  <div class="a" style="left:286.4px;top:358.8px;width:19.1px;height:11.9px;border-radius:6px;background:#21304d"></div>
  <div class="t" style="left:292.4px;top:362.2px;font-size:6.8px;font-weight:bold;color:#4a7de0">IN</div>
  <div class="t" style="left:325.6px;top:361.1px;font-size:7.2px;color:#676774">any</div>
  <div class="t" style="left:446px;top:361.1px;font-size:7.2px;color:#676774">any</div>
  <div class="t" style="left:607.4px;top:363.0px;font-size:6.6px;font-family:'Liberation Mono',monospace;color:#c4c4ce;-webkit-text-stroke:0.2px #c4c4ce">ICMP</div>
  <div class="a" style="left:668.6px;top:357.9px;width:42.5px;height:14px;border-radius:7px;background:#1d3826;border:1px solid #2a5236"></div>
  <div class="t" style="left:677px;top:362.4px;font-size:6.47px;font-weight:bold;color:#4cc35a">ACCEPT</div>
  <div class="t" style="left:723px;top:362.4px;font-size:6.78px;color:#c6c6d0">-</div>
  <svg style="left:934.2px;top:361.6px" width="7" height="6.5" viewBox="0 0 7 6.5"><path d="M1 5.5L6 1" stroke="#85858f" stroke-width="1.9" stroke-linecap="round"/></svg>
  <svg style="left:949.8px;top:360.8px" width="7.2" height="8" viewBox="0 0 7.2 8" fill="none" stroke="#d04a48" stroke-width="1"><path d="M0.6 2.2H6.6M2.5 2.2V0.8H4.7V2.2M1.3 2.2L1.7 7.4H5.5L5.9 2.2"/><path d="M2.6 4.3H4.6"/></svg>
  <div class="a" style="left:209.2px;top:395.8px;width:761.6px;height:1px;background:#2a2a36"></div>
  <svg style="left:212.5px;top:381.8px" width="5" height="6.5" viewBox="0 0 5 6.5" fill="#5a5a68"><circle cx="0.8" cy="0.8" r="0.65"/><circle cx="4" cy="0.8" r="0.65"/><circle cx="0.8" cy="3.25" r="0.65"/><circle cx="4" cy="3.25" r="0.65"/><circle cx="0.8" cy="5.7" r="0.65"/><circle cx="4" cy="5.7" r="0.65"/></svg>
  <div class="t" style="left:228.5px;top:382.8px;font-size:6.6px;color:#a8a8b2">1</div>
  <div class="a" style="left:255.9px;top:380.0px;width:17.5px;height:11px;border-radius:5.5px;background:#5fc43a"></div>
  <div class="a" style="left:263.6px;top:381.3px;width:8.4px;height:8.4px;border-radius:50%;background:#fff"></div>
  <div class="a" style="left:286.4px;top:379.5px;width:19.1px;height:11.9px;border-radius:6px;background:#21304d"></div>
  <div class="t" style="left:292.4px;top:382.9px;font-size:6.8px;font-weight:bold;color:#4a7de0">IN</div>
  <div class="t" style="left:325.6px;top:381.8px;font-size:7.2px;color:#676774">any</div>
  <div class="t" style="left:446px;top:381.8px;font-size:7.2px;color:#676774">any</div>
  <div class="t" style="left:607.4px;top:383.7px;font-size:6.6px;font-family:'Liberation Mono',monospace;color:#c4c4ce;-webkit-text-stroke:0.2px #c4c4ce">TCP/3128</div>
  <div class="a" style="left:668.6px;top:378.6px;width:42.5px;height:14px;border-radius:7px;background:#1d3826;border:1px solid #2a5236"></div>
  <div class="t" style="left:677px;top:383.1px;font-size:6.47px;font-weight:bold;color:#4cc35a">ACCEPT</div>
  <div class="t" style="left:723px;top:383.1px;font-size:6.78px;color:#c6c6d0">PVE Cluster - SPICE Proxy</div>
  <svg style="left:934.2px;top:382.3px" width="7" height="6.5" viewBox="0 0 7 6.5"><path d="M1 5.5L6 1" stroke="#85858f" stroke-width="1.9" stroke-linecap="round"/></svg>
  <svg style="left:949.8px;top:381.5px" width="7.2" height="8" viewBox="0 0 7.2 8" fill="none" stroke="#d04a48" stroke-width="1"><path d="M0.6 2.2H6.6M2.5 2.2V0.8H4.7V2.2M1.3 2.2L1.7 7.4H5.5L5.9 2.2"/><path d="M2.6 4.3H4.6"/></svg>
  <div class="a" style="left:209.2px;top:416.5px;width:761.6px;height:1px;background:#2a2a36"></div>
  <svg style="left:212.5px;top:402.5px" width="5" height="6.5" viewBox="0 0 5 6.5" fill="#5a5a68"><circle cx="0.8" cy="0.8" r="0.65"/><circle cx="4" cy="0.8" r="0.65"/><circle cx="0.8" cy="3.25" r="0.65"/><circle cx="4" cy="3.25" r="0.65"/><circle cx="0.8" cy="5.7" r="0.65"/><circle cx="4" cy="5.7" r="0.65"/></svg>
  <div class="t" style="left:228.5px;top:403.5px;font-size:6.6px;color:#a8a8b2">2</div>
  <div class="a" style="left:255.9px;top:400.7px;width:17.5px;height:11px;border-radius:5.5px;background:#5fc43a"></div>
  <div class="a" style="left:263.6px;top:402.0px;width:8.4px;height:8.4px;border-radius:50%;background:#fff"></div>
  <div class="a" style="left:286.4px;top:400.2px;width:19.1px;height:11.9px;border-radius:6px;background:#21304d"></div>
  <div class="t" style="left:292.4px;top:403.6px;font-size:6.8px;font-weight:bold;color:#4a7de0">IN</div>
  <div class="t" style="left:325.6px;top:402.5px;font-size:7.2px;color:#676774">any</div>
  <div class="t" style="left:446px;top:402.5px;font-size:7.2px;color:#676774">any</div>
  <div class="t" style="left:607.4px;top:404.4px;font-size:6.6px;font-family:'Liberation Mono',monospace;color:#c4c4ce;-webkit-text-stroke:0.2px #c4c4ce">TCP/5900:5999</div>
  <div class="a" style="left:668.6px;top:399.3px;width:42.5px;height:14px;border-radius:7px;background:#1d3826;border:1px solid #2a5236"></div>
  <div class="t" style="left:677px;top:403.8px;font-size:6.47px;font-weight:bold;color:#4cc35a">ACCEPT</div>
  <div class="t" style="left:723px;top:403.8px;font-size:6.78px;color:#c6c6d0">PVE Cluster - VNC/SPICE Console</div>
  <svg style="left:934.2px;top:403.0px" width="7" height="6.5" viewBox="0 0 7 6.5"><path d="M1 5.5L6 1" stroke="#85858f" stroke-width="1.9" stroke-linecap="round"/></svg>
  <svg style="left:949.8px;top:402.2px" width="7.2" height="8" viewBox="0 0 7.2 8" fill="none" stroke="#d04a48" stroke-width="1"><path d="M0.6 2.2H6.6M2.5 2.2V0.8H4.7V2.2M1.3 2.2L1.7 7.4H5.5L5.9 2.2"/><path d="M2.6 4.3H4.6"/></svg>
  <div class="a" style="left:209.2px;top:437.2px;width:761.6px;height:1px;background:#2a2a36"></div>
  <svg style="left:212.5px;top:423.2px" width="5" height="6.5" viewBox="0 0 5 6.5" fill="#5a5a68"><circle cx="0.8" cy="0.8" r="0.65"/><circle cx="4" cy="0.8" r="0.65"/><circle cx="0.8" cy="3.25" r="0.65"/><circle cx="4" cy="3.25" r="0.65"/><circle cx="0.8" cy="5.7" r="0.65"/><circle cx="4" cy="5.7" r="0.65"/></svg>
  <div class="t" style="left:228.5px;top:424.2px;font-size:6.6px;color:#a8a8b2">3</div>
  <div class="a" style="left:255.9px;top:421.4px;width:17.5px;height:11px;border-radius:5.5px;background:#5fc43a"></div>
  <div class="a" style="left:263.6px;top:422.7px;width:8.4px;height:8.4px;border-radius:50%;background:#fff"></div>
  <div class="a" style="left:286.4px;top:420.9px;width:19.1px;height:11.9px;border-radius:6px;background:#21304d"></div>
  <div class="t" style="left:292.4px;top:424.3px;font-size:6.8px;font-weight:bold;color:#4a7de0">IN</div>
  <div class="t" style="left:325.6px;top:423.2px;font-size:7.2px;color:#676774">any</div>
  <div class="t" style="left:446px;top:423.2px;font-size:7.2px;color:#676774">any</div>
  <div class="t" style="left:607.4px;top:425.1px;font-size:6.6px;font-family:'Liberation Mono',monospace;color:#c4c4ce;-webkit-text-stroke:0.2px #c4c4ce">TCP/60000:60050</div>
  <div class="a" style="left:668.6px;top:420.0px;width:42.5px;height:14px;border-radius:7px;background:#1d3826;border:1px solid #2a5236"></div>
  <div class="t" style="left:677px;top:424.5px;font-size:6.47px;font-weight:bold;color:#4cc35a">ACCEPT</div>
  <div class="t" style="left:723px;top:424.5px;font-size:6.78px;color:#c6c6d0">PVE Cluster - Live Migration</div>
  <svg style="left:934.2px;top:423.7px" width="7" height="6.5" viewBox="0 0 7 6.5"><path d="M1 5.5L6 1" stroke="#85858f" stroke-width="1.9" stroke-linecap="round"/></svg>
  <svg style="left:949.8px;top:422.9px" width="7.2" height="8" viewBox="0 0 7.2 8" fill="none" stroke="#d04a48" stroke-width="1"><path d="M0.6 2.2H6.6M2.5 2.2V0.8H4.7V2.2M1.3 2.2L1.7 7.4H5.5L5.9 2.2"/><path d="M2.6 4.3H4.6"/></svg>
  <div class="a" style="left:209.2px;top:457.9px;width:761.6px;height:1px;background:#2a2a36"></div>
  <svg style="left:212.5px;top:443.9px" width="5" height="6.5" viewBox="0 0 5 6.5" fill="#5a5a68"><circle cx="0.8" cy="0.8" r="0.65"/><circle cx="4" cy="0.8" r="0.65"/><circle cx="0.8" cy="3.25" r="0.65"/><circle cx="4" cy="3.25" r="0.65"/><circle cx="0.8" cy="5.7" r="0.65"/><circle cx="4" cy="5.7" r="0.65"/></svg>
  <div class="t" style="left:228.5px;top:444.9px;font-size:6.6px;color:#a8a8b2">4</div>
  <div class="a" style="left:255.9px;top:442.1px;width:17.5px;height:11px;border-radius:5.5px;background:#5fc43a"></div>
  <div class="a" style="left:263.6px;top:443.4px;width:8.4px;height:8.4px;border-radius:50%;background:#fff"></div>
  <div class="a" style="left:286.4px;top:441.6px;width:19.1px;height:11.9px;border-radius:6px;background:#21304d"></div>
  <div class="t" style="left:292.4px;top:445.0px;font-size:6.8px;font-weight:bold;color:#4a7de0">IN</div>
  <div class="t" style="left:325.6px;top:443.9px;font-size:7.2px;color:#676774">any</div>
  <div class="t" style="left:446px;top:443.9px;font-size:7.2px;color:#676774">any</div>
  <div class="t" style="left:607.4px;top:445.8px;font-size:6.6px;font-family:'Liberation Mono',monospace;color:#c4c4ce;-webkit-text-stroke:0.2px #c4c4ce">TCP/22</div>
  <div class="a" style="left:668.6px;top:440.7px;width:42.5px;height:14px;border-radius:7px;background:#1d3826;border:1px solid #2a5236"></div>
  <div class="t" style="left:677px;top:445.2px;font-size:6.47px;font-weight:bold;color:#4cc35a">ACCEPT</div>
  <div class="t" style="left:723px;top:445.2px;font-size:6.78px;color:#c6c6d0">PVE Cluster - SSH</div>
  <svg style="left:934.2px;top:444.4px" width="7" height="6.5" viewBox="0 0 7 6.5"><path d="M1 5.5L6 1" stroke="#85858f" stroke-width="1.9" stroke-linecap="round"/></svg>
  <svg style="left:949.8px;top:443.6px" width="7.2" height="8" viewBox="0 0 7.2 8" fill="none" stroke="#d04a48" stroke-width="1"><path d="M0.6 2.2H6.6M2.5 2.2V0.8H4.7V2.2M1.3 2.2L1.7 7.4H5.5L5.9 2.2"/><path d="M2.6 4.3H4.6"/></svg>
  <div class="a" style="left:209.2px;top:478.6px;width:761.6px;height:1px;background:#2a2a36"></div>
  <svg style="left:212.5px;top:464.6px" width="5" height="6.5" viewBox="0 0 5 6.5" fill="#5a5a68"><circle cx="0.8" cy="0.8" r="0.65"/><circle cx="4" cy="0.8" r="0.65"/><circle cx="0.8" cy="3.25" r="0.65"/><circle cx="4" cy="3.25" r="0.65"/><circle cx="0.8" cy="5.7" r="0.65"/><circle cx="4" cy="5.7" r="0.65"/></svg>
  <div class="t" style="left:228.5px;top:465.6px;font-size:6.6px;color:#a8a8b2">5</div>
  <div class="a" style="left:255.9px;top:462.8px;width:17.5px;height:11px;border-radius:5.5px;background:#5fc43a"></div>
  <div class="a" style="left:263.6px;top:464.1px;width:8.4px;height:8.4px;border-radius:50%;background:#fff"></div>
  <div class="a" style="left:286.4px;top:462.3px;width:19.1px;height:11.9px;border-radius:6px;background:#21304d"></div>
  <div class="t" style="left:292.4px;top:465.7px;font-size:6.8px;font-weight:bold;color:#4a7de0">IN</div>
  <div class="t" style="left:325.6px;top:464.6px;font-size:7.2px;color:#676774">any</div>
  <div class="t" style="left:446px;top:464.6px;font-size:7.2px;color:#676774">any</div>
  <div class="t" style="left:607.4px;top:466.5px;font-size:6.6px;font-family:'Liberation Mono',monospace;color:#c4c4ce;-webkit-text-stroke:0.2px #c4c4ce">TCP/8006</div>
  <div class="a" style="left:668.6px;top:461.4px;width:42.5px;height:14px;border-radius:7px;background:#1d3826;border:1px solid #2a5236"></div>
  <div class="t" style="left:677px;top:465.9px;font-size:6.47px;font-weight:bold;color:#4cc35a">ACCEPT</div>
  <div class="t" style="left:723px;top:465.9px;font-size:6.78px;color:#c6c6d0">PVE Cluster - API/Web UI</div>
  <svg style="left:934.2px;top:465.1px" width="7" height="6.5" viewBox="0 0 7 6.5"><path d="M1 5.5L6 1" stroke="#85858f" stroke-width="1.9" stroke-linecap="round"/></svg>
  <svg style="left:949.8px;top:464.3px" width="7.2" height="8" viewBox="0 0 7.2 8" fill="none" stroke="#d04a48" stroke-width="1"><path d="M0.6 2.2H6.6M2.5 2.2V0.8H4.7V2.2M1.3 2.2L1.7 7.4H5.5L5.9 2.2"/><path d="M2.6 4.3H4.6"/></svg>
  <div class="a" style="left:209.2px;top:499.3px;width:761.6px;height:1px;background:#2a2a36"></div>
  <svg style="left:212.5px;top:485.3px" width="5" height="6.5" viewBox="0 0 5 6.5" fill="#5a5a68"><circle cx="0.8" cy="0.8" r="0.65"/><circle cx="4" cy="0.8" r="0.65"/><circle cx="0.8" cy="3.25" r="0.65"/><circle cx="4" cy="3.25" r="0.65"/><circle cx="0.8" cy="5.7" r="0.65"/><circle cx="4" cy="5.7" r="0.65"/></svg>
  <div class="t" style="left:228.5px;top:486.3px;font-size:6.6px;color:#a8a8b2">6</div>
  <div class="a" style="left:255.9px;top:483.5px;width:17.5px;height:11px;border-radius:5.5px;background:#5fc43a"></div>
  <div class="a" style="left:263.6px;top:484.8px;width:8.4px;height:8.4px;border-radius:50%;background:#fff"></div>
  <div class="a" style="left:286.4px;top:483.0px;width:19.1px;height:11.9px;border-radius:6px;background:#21304d"></div>
  <div class="t" style="left:292.4px;top:486.4px;font-size:6.8px;font-weight:bold;color:#4a7de0">IN</div>
  <div class="t" style="left:325.6px;top:485.3px;font-size:7.2px;color:#676774">any</div>
  <div class="t" style="left:446px;top:485.3px;font-size:7.2px;color:#676774">any</div>
  <div class="t" style="left:607.4px;top:487.2px;font-size:6.6px;font-family:'Liberation Mono',monospace;color:#c4c4ce;-webkit-text-stroke:0.2px #c4c4ce">TCP/6800:7300</div>
  <div class="a" style="left:668.6px;top:482.1px;width:42.5px;height:14px;border-radius:7px;background:#1d3826;border:1px solid #2a5236"></div>
  <div class="t" style="left:677px;top:486.6px;font-size:6.47px;font-weight:bold;color:#4cc35a">ACCEPT</div>
  <div class="t" style="left:723px;top:486.6px;font-size:6.78px;color:#c6c6d0">PVE Cluster - Ceph OSD/MDS</div>
  <svg style="left:934.2px;top:485.8px" width="7" height="6.5" viewBox="0 0 7 6.5"><path d="M1 5.5L6 1" stroke="#85858f" stroke-width="1.9" stroke-linecap="round"/></svg>
  <svg style="left:949.8px;top:485.0px" width="7.2" height="8" viewBox="0 0 7.2 8" fill="none" stroke="#d04a48" stroke-width="1"><path d="M0.6 2.2H6.6M2.5 2.2V0.8H4.7V2.2M1.3 2.2L1.7 7.4H5.5L5.9 2.2"/><path d="M2.6 4.3H4.6"/></svg>
  <div class="a" style="left:209.2px;top:520.0px;width:761.6px;height:1px;background:#2a2a36"></div>
  <svg style="left:212.5px;top:506.0px" width="5" height="6.5" viewBox="0 0 5 6.5" fill="#5a5a68"><circle cx="0.8" cy="0.8" r="0.65"/><circle cx="4" cy="0.8" r="0.65"/><circle cx="0.8" cy="3.25" r="0.65"/><circle cx="4" cy="3.25" r="0.65"/><circle cx="0.8" cy="5.7" r="0.65"/><circle cx="4" cy="5.7" r="0.65"/></svg>
  <div class="t" style="left:228.5px;top:507.0px;font-size:6.6px;color:#a8a8b2">7</div>
  <div class="a" style="left:255.9px;top:504.2px;width:17.5px;height:11px;border-radius:5.5px;background:#5fc43a"></div>
  <div class="a" style="left:263.6px;top:505.5px;width:8.4px;height:8.4px;border-radius:50%;background:#fff"></div>
  <div class="a" style="left:286.4px;top:503.7px;width:19.1px;height:11.9px;border-radius:6px;background:#21304d"></div>
  <div class="t" style="left:292.4px;top:507.1px;font-size:6.8px;font-weight:bold;color:#4a7de0">IN</div>
  <div class="t" style="left:325.6px;top:506.0px;font-size:7.2px;color:#676774">any</div>
  <div class="t" style="left:446px;top:506.0px;font-size:7.2px;color:#676774">any</div>
  <div class="t" style="left:607.4px;top:507.9px;font-size:6.6px;font-family:'Liberation Mono',monospace;color:#c4c4ce;-webkit-text-stroke:0.2px #c4c4ce">TCP/6789,3300</div>
  <div class="a" style="left:668.6px;top:502.8px;width:42.5px;height:14px;border-radius:7px;background:#1d3826;border:1px solid #2a5236"></div>
  <div class="t" style="left:677px;top:507.3px;font-size:6.47px;font-weight:bold;color:#4cc35a">ACCEPT</div>
  <div class="t" style="left:723px;top:507.3px;font-size:6.78px;color:#c6c6d0">PVE Cluster - Ceph Monitor</div>
  <svg style="left:934.2px;top:506.5px" width="7" height="6.5" viewBox="0 0 7 6.5"><path d="M1 5.5L6 1" stroke="#85858f" stroke-width="1.9" stroke-linecap="round"/></svg>
  <svg style="left:949.8px;top:505.7px" width="7.2" height="8" viewBox="0 0 7.2 8" fill="none" stroke="#d04a48" stroke-width="1"><path d="M0.6 2.2H6.6M2.5 2.2V0.8H4.7V2.2M1.3 2.2L1.7 7.4H5.5L5.9 2.2"/><path d="M2.6 4.3H4.6"/></svg>
  <div class="a" style="left:209.2px;top:540.7px;width:761.6px;height:1px;background:#2a2a36"></div>
  <svg style="left:212.5px;top:526.7px" width="5" height="6.5" viewBox="0 0 5 6.5" fill="#5a5a68"><circle cx="0.8" cy="0.8" r="0.65"/><circle cx="4" cy="0.8" r="0.65"/><circle cx="0.8" cy="3.25" r="0.65"/><circle cx="4" cy="3.25" r="0.65"/><circle cx="0.8" cy="5.7" r="0.65"/><circle cx="4" cy="5.7" r="0.65"/></svg>
  <div class="t" style="left:228.5px;top:527.7px;font-size:6.6px;color:#a8a8b2">8</div>
  <div class="a" style="left:255.9px;top:524.9px;width:17.5px;height:11px;border-radius:5.5px;background:#5fc43a"></div>
  <div class="a" style="left:263.6px;top:526.2px;width:8.4px;height:8.4px;border-radius:50%;background:#fff"></div>
  <div class="a" style="left:286.4px;top:524.4px;width:19.1px;height:11.9px;border-radius:6px;background:#21304d"></div>
  <div class="t" style="left:292.4px;top:527.8px;font-size:6.8px;font-weight:bold;color:#4a7de0">IN</div>
  <div class="t" style="left:325.6px;top:526.7px;font-size:7.2px;color:#676774">any</div>
  <div class="t" style="left:446px;top:526.7px;font-size:7.2px;color:#676774">any</div>
  <div class="t" style="left:607.4px;top:528.6px;font-size:6.6px;font-family:'Liberation Mono',monospace;color:#c4c4ce;-webkit-text-stroke:0.2px #c4c4ce">UDP/5405:5412</div>
  <div class="a" style="left:668.6px;top:523.5px;width:42.5px;height:14px;border-radius:7px;background:#1d3826;border:1px solid #2a5236"></div>
  <div class="t" style="left:677px;top:528.0px;font-size:6.47px;font-weight:bold;color:#4cc35a">ACCEPT</div>
  <div class="t" style="left:723px;top:528.0px;font-size:6.78px;color:#c6c6d0">PVE Cluster - Corosync</div>
  <svg style="left:934.2px;top:527.2px" width="7" height="6.5" viewBox="0 0 7 6.5"><path d="M1 5.5L6 1" stroke="#85858f" stroke-width="1.9" stroke-linecap="round"/></svg>
  <svg style="left:949.8px;top:526.4px" width="7.2" height="8" viewBox="0 0 7.2 8" fill="none" stroke="#d04a48" stroke-width="1"><path d="M0.6 2.2H6.6M2.5 2.2V0.8H4.7V2.2M1.3 2.2L1.7 7.4H5.5L5.9 2.2"/><path d="M2.6 4.3H4.6"/></svg>
  <svg style="left:896.6px;top:550.6px" width="5.4" height="5.4" viewBox="0 0 5.4 5.4"><path d="M2.7 0.2V5.2M0.2 2.7H5.2" stroke="#4fb0d0" stroke-width="1"/></svg>
  <div class="t" style="left:905.6px;top:550px;font-size:7.45px;color:#4fb0d0">Ajouter une règle</div>
  <div class="a" id="bottom"></div>
  <svg style="left:40px;top:652px" width="7" height="4.5" viewBox="0 0 7 4.5"><path d="M0.5 4L3.5 1L6.5 4" stroke="#9aa2b2" stroke-width="1.1" fill="none"/></svg>
  <div class="t" style="left:51.9px;top:650.9px;font-size:7.04px;color:#9aa2b2">Tâches</div>
  <div class="a" style="left:78.2px;top:648.8px;width:11.4px;height:11.4px;border-radius:50%;background:#2a3447"></div>
  <div class="t" style="left:80px;top:651.6px;font-size:6.6px;color:#aab2c0">50</div>
  <div class="a" style="left:92px;top:648.8px;width:29.2px;height:11.1px;border-radius:5.5px;background:#e85a58"></div>
  <div class="t" style="left:93.5px;top:651.2px;font-size:6.6px;color:#fff">3 erreurs</div>
  <svg style="left:937px;top:650.3px" width="9" height="9" viewBox="0 0 9 9"><path d="M6.9 1.6A3.7 3.7 0 0 0 0.9 4.9M2.1 7.4A3.7 3.7 0 0 0 8.1 4.1" stroke="#c0c6d2" stroke-width="1.05" fill="none"/><path d="M7.6 0.6V2.4H5.8M1.4 8.4V6.6H3.2" stroke="#c0c6d2" stroke-width="0.9" fill="none"/></svg>
  <svg style="left:956.5px;top:651px" width="7" height="7" viewBox="0 0 7 7"><path d="M3.5 0V7M0 3.5H7" stroke="#c0c6d2" stroke-width="1"/></svg>
  <svg style="left:975px;top:651.5px" width="6" height="6" viewBox="0 0 6 6"><path d="M0.3 0.3L5.7 5.7M5.7 0.3L0.3 5.7" stroke="#c0c6d2" stroke-width="1"/></svg>
</div></div>
</body></html>
